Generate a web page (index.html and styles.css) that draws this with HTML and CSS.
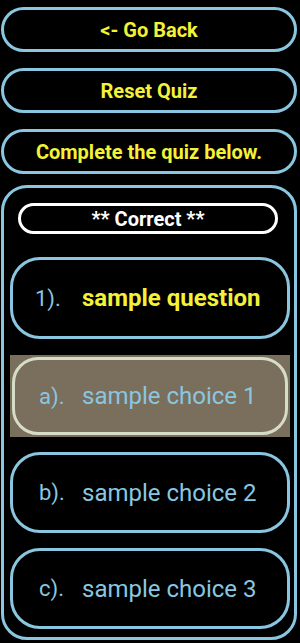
FILE: index.html
```html
<html>
	<head>
		<title>Quiz</title>
		<link rel="stylesheet" href="styles.css">
	</head>
	<body>
		<div class="page">
			<div class="navbutton">&lt;- Go Back</div>
			<div class="navbutton">Reset Quiz</div>
			<div class="navbutton">Complete the quiz below.</div>
			<div class="quizbox">
				<div class="status">** Correct **</div>
				<div class="question">
					<div class="qlabel">1).</div>
					<div class="qtext">sample question</div>
				</div>
				<div class="choice selected">
					<div class="choiceinner">
						<div class="clabel">a).</div>
						<div class="ctext">sample choice 1</div>
					</div>
				</div>
				<div class="choice">
					<div class="choiceinner">
						<div class="clabel">b).</div>
						<div class="ctext">sample choice 2</div>
					</div>
				</div>
				<div class="choice">
					<div class="choiceinner">
						<div class="clabel">c).</div>
						<div class="ctext">sample choice 3</div>
					</div>
				</div>
			</div>
		</div>
	</body>
</html>
```

FILE: styles.css
```css
body{
	margin: 0;
	background-color: black;
	font-family: Roboto, "Liberation Sans", sans-serif;
}
div.page{
	display: flex;
	flex-direction: column;
	padding: 7px 3px 0 1px;
}

/* top buttons */
div.navbutton{
	box-sizing: border-box;
	height: 45px;
	margin-bottom: 16px;
	border: 3px solid #8ac6e0;
	border-radius: 23px;
	display: flex;
	align-items: center;
	justify-content: center;
	color: #f4f136;
	font-size: 20px;
	font-weight: bold;
}
div.navbutton:nth-child(3){
	margin-bottom: 11px;
}

/* quiz area */
div.quizbox{
	box-sizing: border-box;
	height: 455px;
	border: 3px solid #8ac6e0;
	border-radius: 26px;
	padding: 15px 4px 0 6px;
	display: flex;
	flex-direction: column;
}
div.status{
	box-sizing: border-box;
	height: 31px;
	margin: 0 12px 0 8px;
	border: 3px solid white;
	border-radius: 16px;
	display: flex;
	align-items: center;
	justify-content: center;
	color: white;
	font-size: 20px;
	font-weight: bold;
}
div.question{
	box-sizing: border-box;
	height: 82px;
	margin-top: 23px;
	border: 3px solid #8ac6e0;
	border-radius: 30px;
	display: flex;
	align-items: center;
}
div.qlabel{
	width: 69px;
	padding-left: 22px;
	box-sizing: border-box;
	color: #8ac6e0;
	font-size: 22px;
}
div.qtext{
	color: #f4f136;
	font-size: 24px;
	font-weight: bold;
}
div.choice{
	box-sizing: border-box;
	height: 81px;
	margin-top: 15px;
	display: flex;
}
div.choice.selected{
	height: 82px;
	margin-top: 16px;
	padding: 2px;
	background-color: #7a6e5c;
}
div.choiceinner{
	flex: 1;
	border: 3px solid #8ac6e0;
	border-radius: 30px;
	display: flex;
	align-items: center;
}
div.choice.selected div.choiceinner{
	border-color: #d6dcc6;
	border-radius: 26px;
}
div.clabel{
	width: 69px;
	padding-left: 26px;
	box-sizing: border-box;
	color: #8ac6e0;
	font-size: 22px;
}
div.choice.selected div.clabel{
	width: 67px;
	padding-left: 24px;
}
div.ctext{
	color: #8ac6e0;
	font-size: 24px;
}
```
